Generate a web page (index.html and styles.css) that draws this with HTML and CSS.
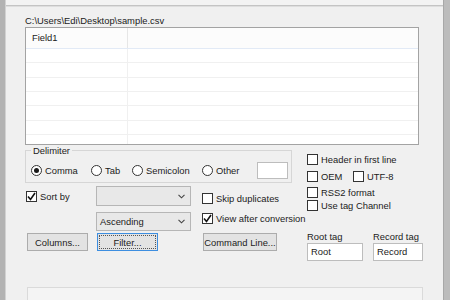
FILE: index.html
```html
<!DOCTYPE html>
<html lang="en">
<head>
    <meta charset="UTF-8">
    <meta name="viewport" content="width=device-width, initial-scale=1.0">
    <title>CSV to XML Converter</title>
    <link rel="stylesheet" href="styles.css">
</head>
<body>
    <div class="window">
        <div class="edge-left"></div>
        <div class="pane">
            <div class="top-rule"></div>
            <div class="content">
                <div class="path">C:\Users\Edi\Desktop\sample.csv</div>

                <div class="list">
                    <div class="list-row list-head">
                        <div class="cell">Field1</div>
                        <div class="cell"></div>
                    </div>
                    <div class="list-row"><div class="cell"></div><div class="cell"></div></div>
                    <div class="list-row"><div class="cell"></div><div class="cell"></div></div>
                    <div class="list-row"><div class="cell"></div><div class="cell"></div></div>
                    <div class="list-row"><div class="cell"></div><div class="cell"></div></div>
                    <div class="list-row"><div class="cell"></div><div class="cell"></div></div>
                    <div class="list-row"><div class="cell"></div><div class="cell"></div></div>
                    <div class="list-row"><div class="cell"></div><div class="cell"></div></div>
                </div>

                <div class="options">
                    <div class="options-left">
                        <fieldset class="delimiter">
                            <legend>Delimiter</legend>
                            <label class="option w-comma"><span class="radio checked"></span>Comma</label>
                            <label class="option w-tab"><span class="radio"></span>Tab</label>
                            <label class="option w-semicolon"><span class="radio"></span>Semicolon</label>
                            <label class="option w-other"><span class="radio"></span>Other</label>
                            <span class="textbox other-box"></span>
                        </fieldset>

                        <div class="sort-grid">
                            <label class="option sort-by">
                                <span class="check">
                                    <svg width="9" height="9" viewBox="0 0 9 9"><polyline points="1,4.5 3.5,7.5 8,1" fill="none" stroke="#111" stroke-width="1.6"/></svg>
                                </span>Sort by
                            </label>
                            <div class="combo">
                                <span></span>
                                <svg width="7" height="5" viewBox="0 0 7 5"><polyline points="0.5,0.8 3.5,3.8 6.5,0.8" fill="none" stroke="#444" stroke-width="1.1"/></svg>
                            </div>
                            <label class="option late"><span class="check"></span>Skip duplicates</label>

                            <div></div>
                            <div class="combo combo-low">
                                <span>Ascending</span>
                                <svg width="7" height="5" viewBox="0 0 7 5"><polyline points="0.5,0.8 3.5,3.8 6.5,0.8" fill="none" stroke="#444" stroke-width="1.1"/></svg>
                            </div>
                            <label class="option late">
                                <span class="check">
                                    <svg width="9" height="9" viewBox="0 0 9 9"><polyline points="1,4.5 3.5,7.5 8,1" fill="none" stroke="#111" stroke-width="1.6"/></svg>
                                </span>View after conversion
                            </label>

                            <button class="btn btn-columns">Columns...</button>
                            <button class="btn btn-filter">Filter...</button>
                            <button class="btn btn-command">Command Line...</button>
                        </div>
                    </div>

                    <div class="options-right">
                        <div class="check-stack">
                            <label class="option"><span class="check"></span>Header in first line</label>
                            <div class="check-pair">
                                <label class="option w-oem"><span class="check"></span>OEM</label>
                                <label class="option"><span class="check"></span>UTF-8</label>
                            </div>
                            <label class="option"><span class="check"></span>RSS2 format</label>
                            <label class="option"><span class="check"></span>Use tag Channel</label>
                        </div>

                        <div class="tag-grid">
                            <div class="tag-label">Root tag</div>
                            <div class="tag-label">Record tag</div>
                            <div class="textbox">Root</div>
                            <div class="textbox">Record</div>
                        </div>
                    </div>
                </div>

                <div class="status"></div>
            </div>
        </div>
        <div class="edge-right"></div>
    </div>
</body>
</html>
```

FILE: styles.css
```css
* {
    box-sizing: border-box;
}
body {
    margin: 0;
    font-family: "Liberation Sans", Arial, sans-serif;
    font-size: 9.4px;
    color: #1b1b1b;
    background-color: #f0f0f0;
    overflow: hidden;
}
.window {
    display: flex;
    width: 450px;
    height: 300px;
    overflow: hidden;
}
.edge-left {
    width: 6px;
    background-color: #b3b3b3;
    border-right: 1px solid #d2d2d2;
}
.edge-right {
    width: 7px;
    background-color: #bcbcbc;
    border-left: 1px solid #a8a8a8;
}
.pane {
    flex: 1;
    min-width: 0;
}
.top-rule {
    height: 7px;
    background: linear-gradient(to bottom, #f3f3f3 5px, #c4c4c4 5px, #c4c4c4 6px, #dedede 6px);
}
.content {
    padding-left: 19px;
}
.path {
    height: 20px;
    padding-top: 8px;
    line-height: 12px;
}

/* list view */
.list {
    width: 394px;
    height: 118px;
    border: 1px solid #a3a3a3;
    background-color: #fff;
    overflow: hidden;
}
.list-row {
    display: flex;
    height: 14.33px;
    border-bottom: 1px solid #f0f0f0;
}
.list-row .cell:first-child {
    width: 102px;
    border-right: 1px solid #f0f0f0;
}
.list-head {
    height: 21px;
    line-height: 20px;
    background-color: #fcfcfc;
    border-bottom-color: #e2eaf6;
}
.list-head .cell:first-child {
    padding-left: 6px;
    border-right-color: #e6e6e6;
}

/* options */
.options {
    display: flex;
    gap: 15px;
}
.options-left {
    width: 267px;
}
.delimiter {
    display: flex;
    align-items: center;
    height: 38px;
    margin: 0;
    padding: 6px 0 3px 5px;
    border: 1px solid #d6d6d6;
}
.delimiter legend {
    padding: 0 2px;
    line-height: 11px;
}
.option {
    display: inline-flex;
    align-items: center;
    gap: 3px;
    height: 11px;
    line-height: 11px;
    white-space: nowrap;
}
.w-comma { width: 60px; }
.w-tab { width: 41px; }
.w-semicolon { width: 70px; }
.w-other { width: 55px; }
.w-oem { width: 46px; }

.radio {
    position: relative;
    width: 11px;
    height: 11px;
    border: 1px solid #333;
    border-radius: 50%;
    background-color: #fff;
}
.radio.checked::after {
    content: "";
    position: absolute;
    left: 2px;
    top: 2px;
    width: 5px;
    height: 5px;
    border-radius: 50%;
    background-color: #1a1a1a;
}
.check {
    display: flex;
    align-items: center;
    justify-content: center;
    width: 11px;
    height: 11px;
    border: 1px solid #333;
    background-color: #fff;
}
.textbox {
    height: 18px;
    padding-left: 3px;
    line-height: 16px;
    border: 1px solid #bdbdbd;
    background-color: #fff;
}
.other-box {
    width: 31px;
    height: 17px;
}

.sort-grid {
    display: grid;
    grid-template-columns: 71px 106px auto;
    grid-template-rows: 20px 25px 20px;
    margin-top: 3px;
}
.sort-by {
    align-self: center;
    margin-left: 1px;
}
.late {
    align-self: start;
    margin-top: 7px;
}
.combo {
    display: flex;
    align-items: center;
    justify-content: space-between;
    width: 95px;
    height: 20px;
    padding: 0 5px 0 3px;
    border: 1px solid #b6b6b6;
    background-color: #e8e8e8;
}
.combo-low {
    align-self: end;
    height: 19px;
}
.btn {
    align-self: end;
    height: 18px;
    padding: 0;
    font: inherit;
    color: inherit;
    background-color: #e3e3e3;
    border: 1px solid #acacac;
}
.btn-columns {
    width: 61px;
    margin-left: 2px;
}
.btn-filter {
    width: 61px;
    margin-left: 1px;
    border-color: #3d8ee0;
    outline: 1px dotted #555;
    outline-offset: -3px;
}
.btn-command {
    width: 74px;
    margin-left: 1px;
}

.check-stack {
    display: grid;
    grid-template-rows: 17px 16px 13px 11px;
    align-items: start;
    padding-top: 9px;
}
.check-pair {
    display: flex;
}
.tag-grid {
    display: grid;
    grid-template-columns: 56px 50px;
    grid-template-rows: 13px 18px;
    column-gap: 10px;
    margin-top: 19px;
}
.tag-label {
    line-height: 13px;
    white-space: nowrap;
}

/* lower panel, cut off by the window edge */
.status {
    width: 396px;
    height: 13px;
    margin: 26px 0 0 2px;
    border: 1px solid #dadada;
    border-bottom: none;
    background-color: #f4f4f4;
}
```
